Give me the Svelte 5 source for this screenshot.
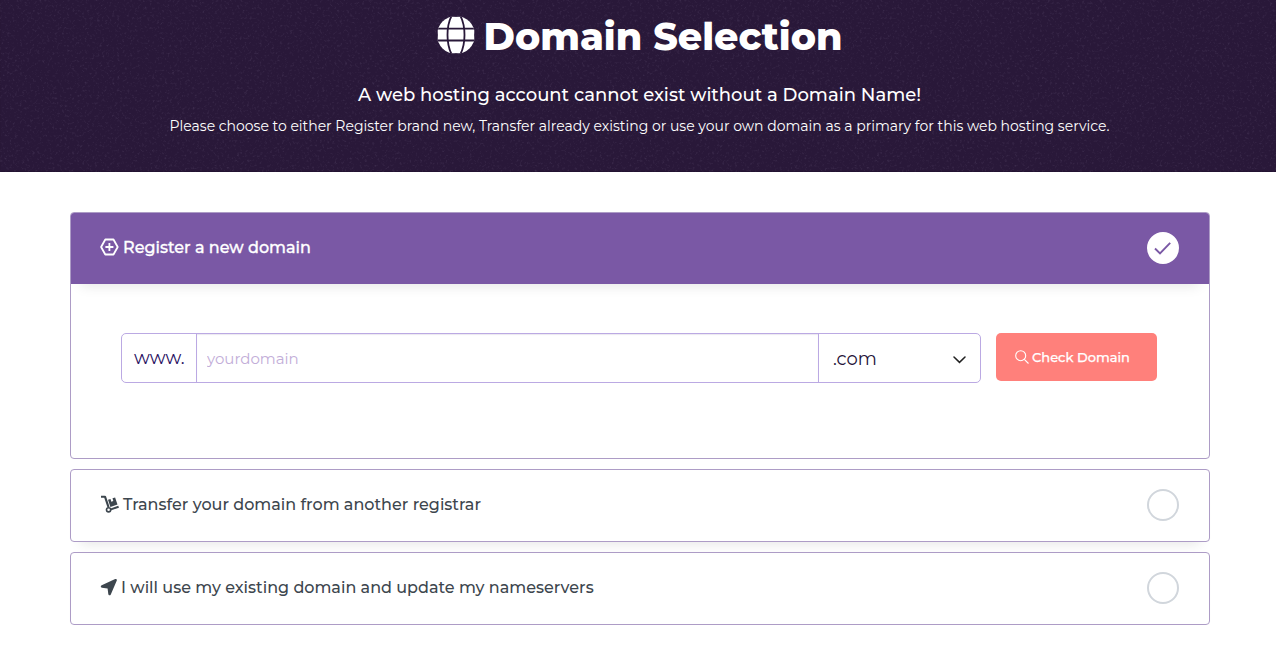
<script>
  let domain = $state('')

  const others = [
    { id: 'transfer', label: 'Transfer your domain from another registrar' },
    { id: 'own', label: 'I will use my existing domain and update my nameservers' },
  ]
</script>

<header>
  <svg class="grain" width="100%" height="100%" aria-hidden="true">
    <filter id="grain" x="0" y="0" width="100%" height="100%">
      <feTurbulence type="fractalNoise" baseFrequency="0.4" numOctaves="5" seed="7" />
      <feColorMatrix
        values="0 0 0 0 0.5  0 0 0 0 0.42  0 0 0 0 0.62  2.2 0 0 0 -1.2"
      />
    </filter>
    <rect width="100%" height="100%" filter="url(#grain)" />
  </svg>
  <h1>
    <svg class="globe" width="38" height="38" viewBox="0 0 38 38">
      <clipPath id="disc"><circle cx="19" cy="19" r="19" /></clipPath>
      <g clip-path="url(#disc)">
        <rect width="38" height="38" fill="#fff" />
        <path d="M0 12.7h38M0 24.5h38" />
        <path d="M15 -1C9 10 9 28 15 39M23 -1C29 10 29 28 23 39" />
      </g>
    </svg>
    <span>Domain Selection</span>
  </h1>
  <p class="lead">A web hosting account cannot exist without a Domain Name!</p>
  <p class="hint">
    Please choose to either Register brand new, Transfer already existing or use your own domain as
    a primary for this web hosting service.
  </p>
</header>

<main>
  <section class="card open">
    <div class="option active">
      <svg width="19" height="18" viewBox="0 0 19 18" fill="none" stroke="#fff" stroke-width="1.8">
        <path d="M5.3 1.5h8.2L17.7 9l-4.2 7.5H5.3L1.1 9z" stroke-linejoin="round" />
        <path d="M9.4 5v8M5.4 9h8" />
      </svg>
      <span class="label">Register a new domain</span>
      <span class="radio checked">
        <svg width="18" height="14" viewBox="0 0 18 14" fill="none" stroke="#7a58a5" stroke-width="1.9">
          <path d="M1 7.5l5 5L16.2 1.8" />
        </svg>
      </span>
    </div>
    <form onsubmit={(e) => e.preventDefault()}>
      <div class="group">
        <span class="prefix">www.</span>
        <input type="text" placeholder="yourdomain" bind:value={domain} />
        <div class="tld">
          <span>.com</span>
          <svg width="13" height="8" viewBox="0 0 13 8" fill="none" stroke="#222" stroke-width="1.5">
            <path d="M1 1l5.5 5.4L12 1" stroke-linecap="round" />
          </svg>
        </div>
      </div>
      <button type="submit">
        <svg width="14" height="14" viewBox="0 0 14 14" fill="none" stroke="#fff" stroke-width="1.1">
          <circle cx="5.7" cy="5.7" r="5" />
          <path d="M9.3 9.3l4.2 4.2" />
        </svg>
        <span>Check Domain</span>
      </button>
    </form>
  </section>

  {#each others as option}
    <section class="card">
      <div class="option">
        {#if option.id === 'transfer'}
          <svg width="19" height="18" viewBox="0 0 19 18" fill="none" stroke="#3d464e">
            <path d="M1 1.7h4l3.5 10.5" stroke-width="2.1" stroke-linejoin="round" />
            <path d="M10.2 14.6l8.4-2.9" stroke-width="2" />
            <circle cx="8.6" cy="14.8" r="2.1" stroke-width="1.6" />
            <path
              d="M8 4.8l2.5-.8.8 2.7 2-.7-.8-2.7 2.6-.8 2.4 7.1-7.1 2.4z"
              fill="#3d464e"
              stroke="none"
            />
          </svg>
        {:else}
          <svg width="17" height="18" viewBox="0 0 17 18" fill="#3d464e">
            <path d="M15.2 1.1L1.7 7.2C.4 7.8.5 9.6 2 9.8l5.6.7.7 5.6c.2 1.5 1.9 1.6 2.5.3L16.8 2.6c.4-1-.6-1.9-1.6-1.5z" />
          </svg>
        {/if}
        <span class="label">{option.label}</span>
        <span class="radio"></span>
      </div>
    </section>
  {/each}
</main>

<style>
  :global(body) {
    background: #fff;
    font-family: Montserrat, Inter, sans-serif;
    overflow: hidden;
  }

  header {
    position: relative;
    box-sizing: border-box;
    height: 172px;
    padding: 13px 0 0 3px;
    background: #291839;
    box-shadow: inset 0 -1px 1px rgba(15, 5, 25, 0.25);
    color: #fff;
    text-align: center;
  }

  .grain {
    position: absolute;
    inset: 0;
    opacity: 0.15;
  }

  h1,
  .lead,
  .hint {
    position: relative;
    margin: 0;
    white-space: nowrap;
  }

  h1 {
    display: flex;
    align-items: center;
    justify-content: center;
    gap: 9px;
    height: 46px;
    font-size: 38px;
    font-weight: 800;
  }

  .globe {
    flex: none;
    margin-bottom: 2px;
    fill: none;
    stroke: #291839;
    stroke-width: 1.8;
  }

  .lead {
    margin-top: 23px;
    font-size: 18px;
    font-weight: 500;
    line-height: 26px;
  }

  .hint {
    margin-top: 7px;
    font-size: 14px;
    line-height: 22px;
  }

  main {
    display: flex;
    flex-direction: column;
    gap: 10px;
    padding: 40px 66px 0 70px;
  }

  .card {
    box-sizing: border-box;
    height: 73px;
    border: 1px solid #ad9cc6;
    border-radius: 4px;
    box-shadow: 0 12px 12px -10px rgba(0, 0, 0, 0.1);
  }

  .card.open {
    height: 247px;
    box-shadow: none;
  }

  .option {
    display: flex;
    align-items: center;
    box-sizing: border-box;
    height: 71px;
    padding: 0 30px 1px 29px;
    color: #3d464e;
  }

  .option > svg {
    flex: none;
    margin-bottom: 2px;
  }

  .active {
    border-radius: 3px 3px 0 0;
    background: #7a58a5;
    box-shadow: 0 12px 12px -10px rgba(0, 0, 0, 0.1);
    color: #fff;
  }

  .label {
    margin: 0 auto 1px 4px;
    font-size: 16px;
    font-weight: 500;
    line-height: 20px;
    white-space: nowrap;
  }

  /* thin outline thickens the white text on the purple bar */
  .active .label {
    -webkit-text-stroke: 0.3px #fff;
  }

  .radio {
    display: flex;
    align-items: center;
    justify-content: center;
    box-sizing: border-box;
    width: 32px;
    height: 32px;
    border: 2px solid #d1d6dc;
    border-radius: 50%;
    background: #fff;
  }

  .checked {
    border-color: #fff;
  }

  form {
    display: flex;
    gap: 15px;
    padding: 49px 52px 0 50px;
  }

  .group {
    display: flex;
    flex: 1;
    box-sizing: border-box;
    height: 50px;
    border: 1px solid #bba9e3;
    border-radius: 5px;
  }

  .prefix {
    box-sizing: border-box;
    width: 75px;
    padding-left: 12px;
    border-right: 1px solid #bba9e3;
    color: #29105f;
    font-size: 18px;
    line-height: 48px;
  }

  input {
    flex: 1;
    min-width: 0;
    padding: 0 10px;
    border: 0;
    outline: 0;
    background: none;
    box-shadow: inset 0 1px 1px rgba(60, 30, 100, 0.1);
    color: #29105f;
    font: 15px Montserrat, Inter, sans-serif;
  }

  input::placeholder {
    color: #c2add8;
    opacity: 1;
  }

  .tld {
    display: flex;
    align-items: center;
    justify-content: space-between;
    box-sizing: border-box;
    width: 162px;
    padding: 0 14px;
    border-left: 1px solid #bba9e3;
    color: #251238;
    font-size: 18px;
  }

  .tld span {
    margin-top: 2px;
  }

  .tld svg {
    margin-top: 4px;
  }

  button[type='submit'] {
    display: flex;
    align-items: center;
    justify-content: center;
    gap: 3px;
    width: 161px;
    height: 48px;
    padding: 0 8px 0 0;
    border: 0;
    border-radius: 5px;
    background: #ff807b;
    color: #fff;
    font: 500 13px Montserrat, Inter, sans-serif;
    -webkit-text-stroke: 0.25px #fff;
    white-space: nowrap;
  }
</style>
